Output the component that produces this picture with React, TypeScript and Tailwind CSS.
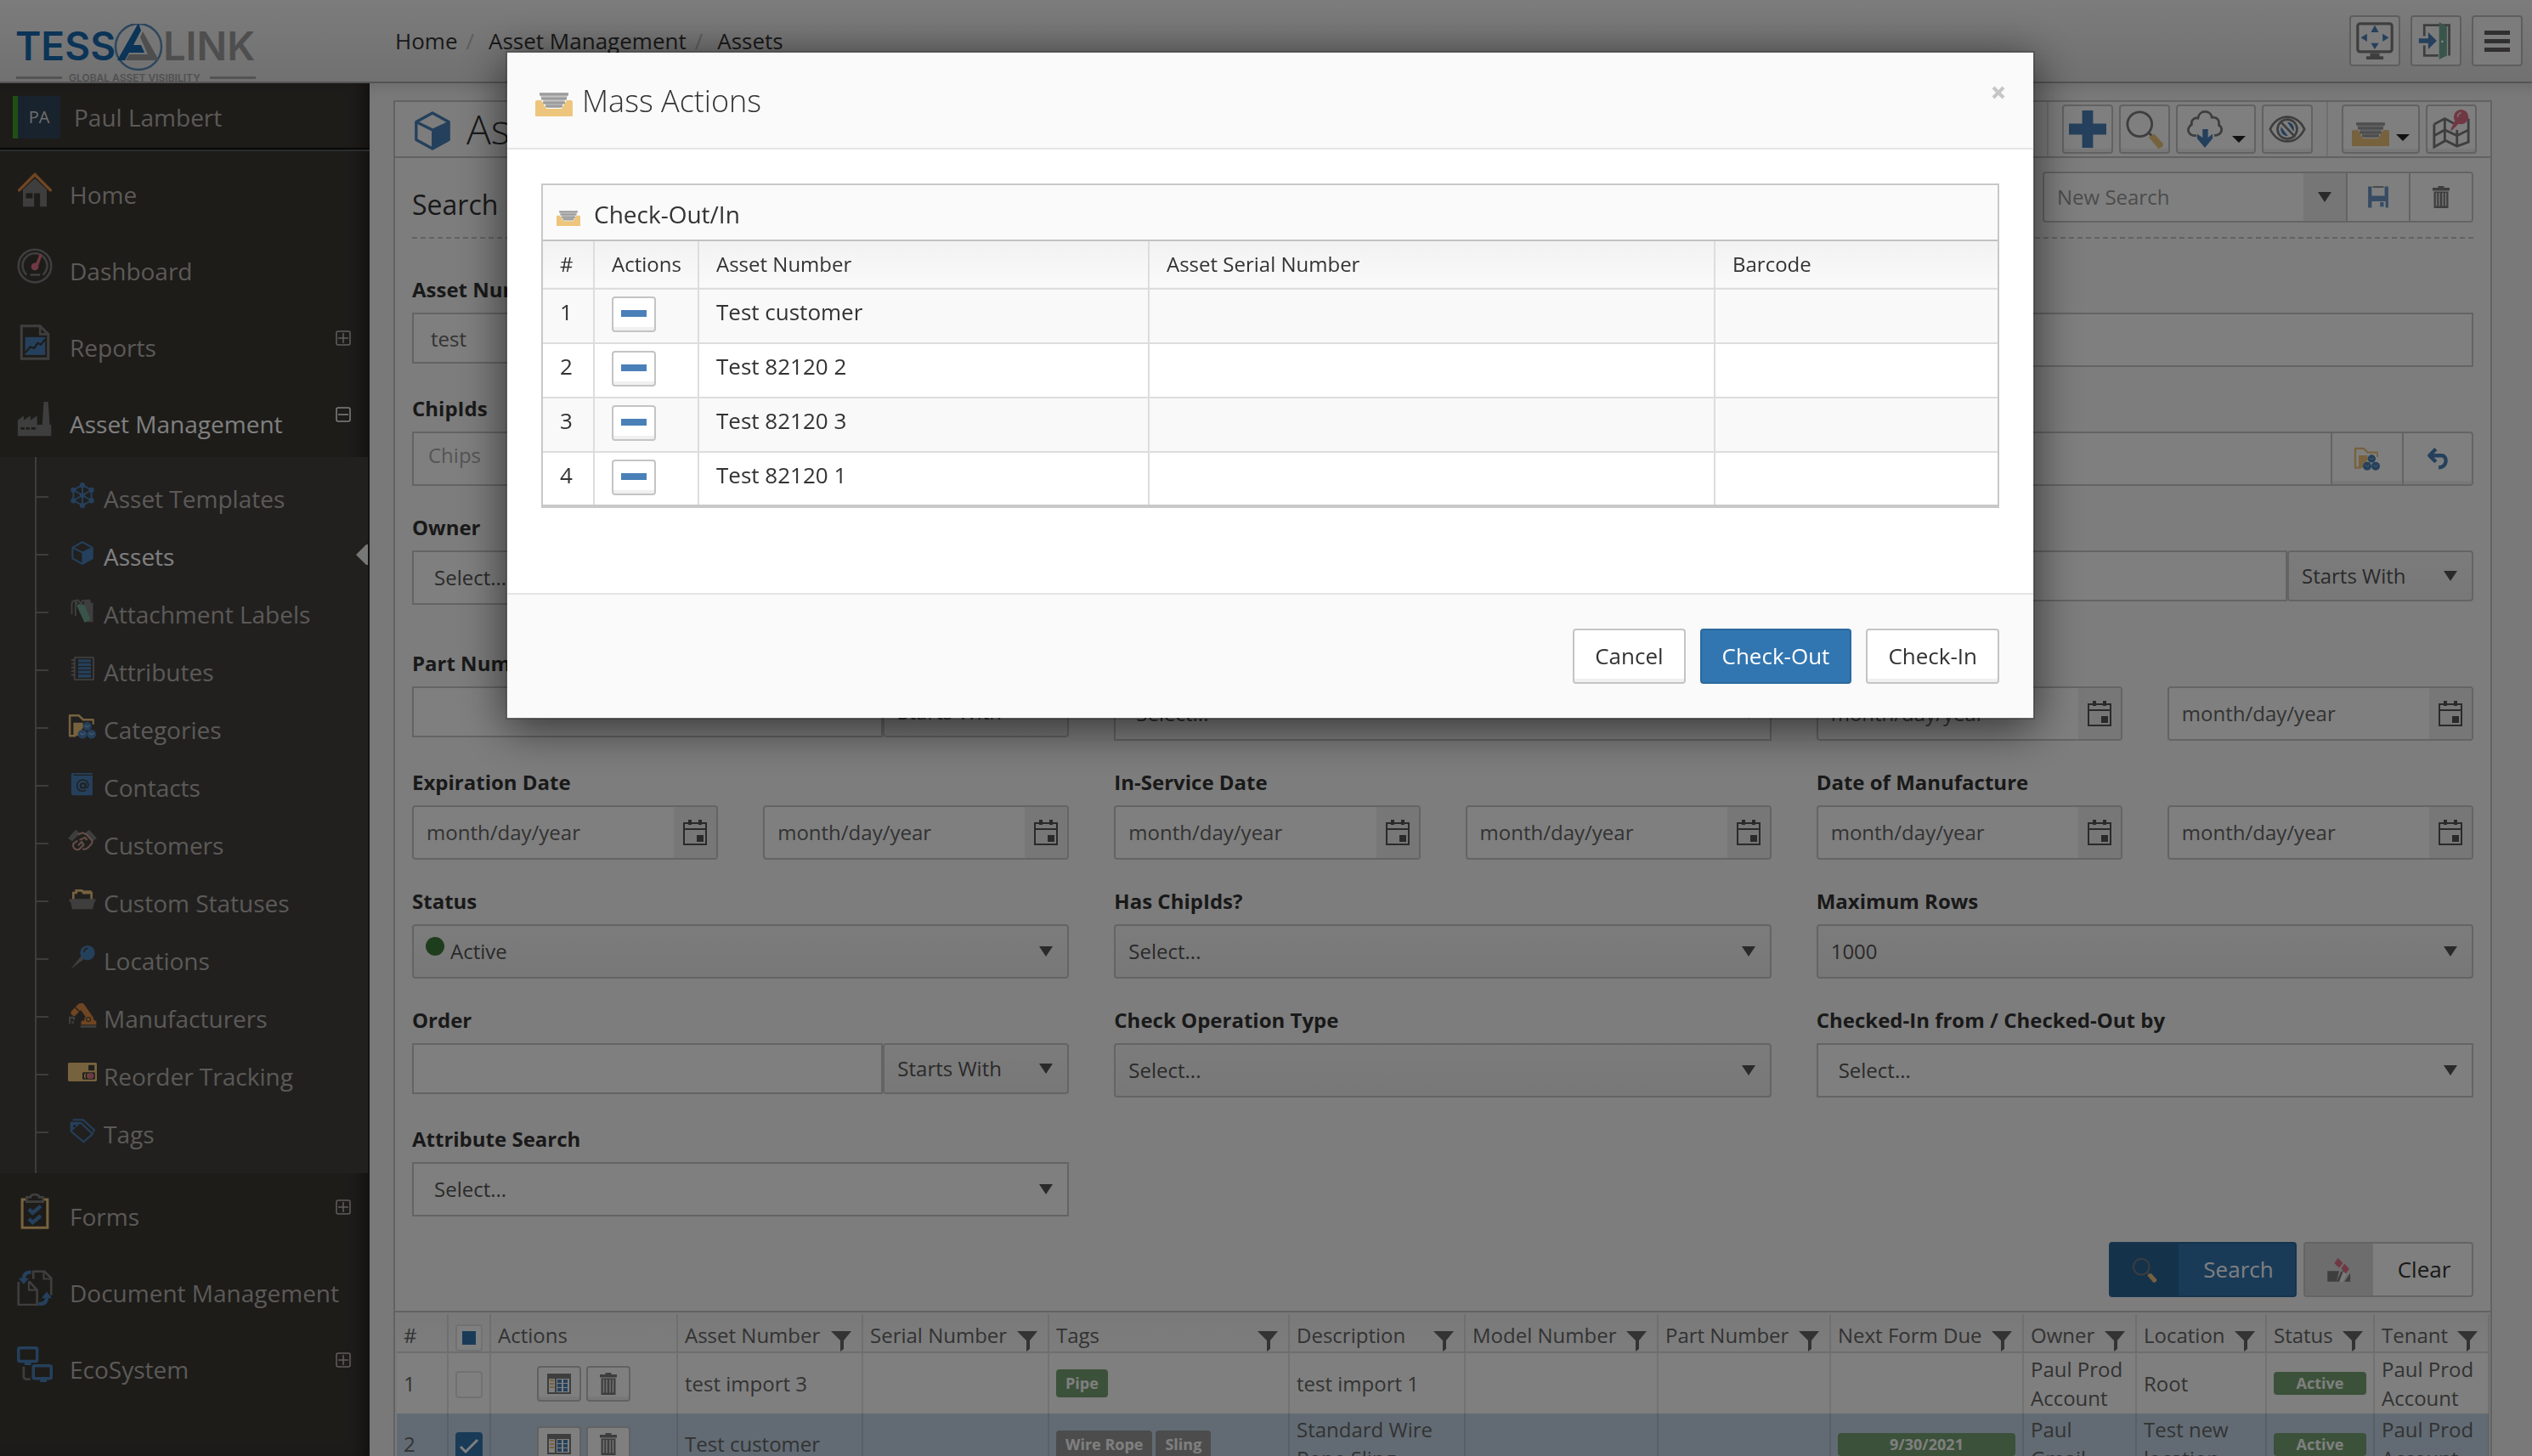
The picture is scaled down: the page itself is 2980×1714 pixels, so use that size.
import { useId } from "react";
import type { ReactNode } from "react";
import clsx from "clsx";

// ─── Icons ────────────────────────────────────────────────────────────────────

const BLUE   = "#4a80b8";
const GRAY   = "#7d7d7d";
const YELLOW = "#eec57c";
const GREEN  = "#72ab96";
const RED    = "#e07086";
const ORANGE = "#e08b42";

type IconProps = { className?: string };

function Svg({ className, children, box = "0 0 48 48" }: IconProps & { children: ReactNode; box?: string }) {
  return (
    <svg viewBox={box} className={clsx("shrink-0", className)} fill="none" aria-hidden="true">
      {children}
    </svg>
  );
}

function Logo() {
  return (
    <svg viewBox="0 0 282 80" className="h-20 w-[282px]" role="img" aria-label="Tessalink">
      <g fontFamily="Inter, sans-serif" fontSize="46">
        <text x="-1" y="43" fill="#1668ae" fontWeight="600">TESS</text>
        <text x="173" y="43" fill="#9c9c9c" fontWeight="600" fontSize="47">LINK</text>
      </g>
      <circle cx="144" cy="27" r="27" fill="none" stroke="#5b8db8" strokeWidth="2.5" />
      <path d="M144 -1 L119 43 H128 L133 34 H151 L147 25 H138 L147 8 Z" fill="#1668ae" />
      <path d="M149 9 L168 43 H129 L133 36 H155 L146 16 Z" fill="#9c9c9c" />
      <rect x="0" y="62" width="54" height="3" fill="#a6a6a6" />
      <rect x="228" y="62" width="54" height="3" fill="#a6a6a6" />
      <text x="62" y="68" fontFamily="Inter, sans-serif" fontWeight="600" fontSize="12" fill="#a0a0a0">
        GLOBAL ASSET VISIBILITY
      </text>
    </svg>
  );
}

const HomeIcon = (p: IconProps) => (
  <Svg {...p}>
    <path d="M8 24 24 9l16 15v23H31V29h-8v18H8z" fill={GRAY} />
    <rect x="12" y="29" width="9" height="7" fill="#3a3833" />
    <path d="M3 25 24 4l21 21" stroke={ORANGE} strokeWidth="4" strokeLinecap="round" />
  </Svg>
);

const DashboardIcon = (p: IconProps) => (
  <Svg {...p}>
    <circle cx="24" cy="24" r="22" stroke={GRAY} strokeWidth="3" />
    <path d="M13 36A16.500 16.500 0 1 1 35 36" stroke={GRAY} strokeWidth="3" />
    <path d="M18 36h13" stroke={GRAY} strokeWidth="3" />
    <path d="M31 7l3 2-6 17h-5z" fill={RED} />
    <circle cx="24" cy="25" r="5" fill={RED} />
  </Svg>
);

const ReportsIcon = (p: IconProps) => (
  <Svg {...p}>
    <path d="M6 2h25l11 11v33H6z" stroke={GRAY} strokeWidth="3.500" />
    <path d="M31 2v11h11" stroke={GRAY} strokeWidth="3" />
    <rect x="11" y="17" width="27" height="24" fill={BLUE} />
    <path d="M11 38l7-8 5 2 5-7 4 2 6-7" stroke="#3a3833" strokeWidth="2.500" />
  </Svg>
);

const FactoryIcon = (p: IconProps) => (
  <Svg {...p}>
    <path d="M36 1h6l2 31H34z" fill={GRAY} />
    <path d="M1 26l8-6v6l9-6v6l9-6v12h19v15H1z" fill={GRAY} />
    <path d="M5 37h5M12 37h5M19 37h6" stroke="#3a3833" strokeWidth="3" />
  </Svg>
);

const FormsIcon = (p: IconProps) => (
  <Svg {...p}>
    <path d="M12 8H7v38h34V8h-5" stroke={YELLOW} strokeWidth="3.500" />
    <path d="M13 5h5c1-5 11-5 12 0h5v6H13z" stroke={GRAY} strokeWidth="3" />
    <path d="M16 21l5 5 11-9M16 34l5 5 11-9" stroke={BLUE} strokeWidth="5" />
  </Svg>
);

const DocumentsIcon = (p: IconProps) => (
  <Svg {...p}>
    <path d="M22 12V2h15l9 9v23" stroke={GRAY} strokeWidth="3" />
    <path d="M36 2v10h10" stroke={GRAY} strokeWidth="2.500" />
    <path d="M2 16v31h25V27L16 15" stroke={GRAY} strokeWidth="3" />
    <path d="M16 15v12h11" stroke={GRAY} strokeWidth="2.500" />
    <path d="M19 3c-7 0-10 3-10 9" stroke={BLUE} strokeWidth="5" />
    <path d="M2 11h14l-7 8z" fill={BLUE} />
    <path d="M29 46c8 0 11-3 11-9" stroke={BLUE} strokeWidth="5" />
    <path d="M33 38h14l-7-9z" fill={BLUE} />
  </Svg>
);

const EcoIcon = (p: IconProps) => (
  <Svg {...p}>
    <rect x="2" y="2" width="25" height="18" rx="2" stroke={BLUE} strokeWidth="4" />
    <path d="M10 23h9M31 46h9" stroke={BLUE} strokeWidth="4" />
    <rect x="22" y="26" width="24" height="17" rx="2" stroke={BLUE} strokeWidth="4" />
    <path d="M9 27v14c0 3 2 3 9 3" stroke={GRAY} strokeWidth="3" />
  </Svg>
);

const TemplateIcon = (p: IconProps) => (
  <Svg {...p}>
    <path d="M24 5l17 9v20l-17 9-17-9V14zM7 14l34 20M41 14L7 34M24 5v38" stroke={BLUE} strokeWidth="3" />
    {[[24, 5], [41, 14], [41, 34], [24, 43], [7, 34], [7, 14], [24, 24]].map(([x, y]) => (
      <circle key={`${x}-${y}`} cx={x} cy={y} r="5" fill={BLUE} />
    ))}
  </Svg>
);

const CubeIcon = (p: IconProps) => (
  <Svg {...p}>
    <path d="M24 2l20 11v22L24 46 4 35V13z" stroke={BLUE} strokeWidth="3.500" strokeLinejoin="round" />
    <path d="M4 13l20 10" stroke={BLUE} strokeWidth="3.500" />
    <path d="M23 22l21-10v23L23 47z" fill={BLUE} />
  </Svg>
);

const LabelsIcon = (p: IconProps) => (
  <Svg {...p}>
    <path d="M27 6c8-6 13-4 13 3h4v36H27z" fill={GRAY} />
    <path d="M4 30V12c0-9 10-9 10 0M11 34V8c0-6 8-6 8 2" stroke={GRAY} strokeWidth="3" />
    <path d="M13 14l9-5 6 5 11 26-11 6z" fill={GREEN} />
    <path d="M22 14c-2-8 4-12 8-8" stroke={GRAY} strokeWidth="3" />
  </Svg>
);

const NotebookIcon = (p: IconProps) => (
  <Svg {...p}>
    <rect x="9" y="3" width="36" height="42" rx="2" stroke={GRAY} strokeWidth="3" />
    <rect x="16" y="7" width="24" height="34" fill={BLUE} />
    <path d="M16 13h24M16 20h24M16 27h24M16 34h24" stroke="#41403d" strokeWidth="2" />
    <path d="M3 8h8M3 15h8M3 22h8M3 29h8M3 36h8" stroke={GRAY} strokeWidth="3" />
  </Svg>
);

const CategoryIcon = (p: IconProps) => (
  <Svg {...p}>
    <path d="M43 13H25l-7-7H3v34h10" stroke={YELLOW} strokeWidth="3.500" strokeLinejoin="round" />
    <path d="M9 18h16v8L16 40H9z" fill={YELLOW} />
    <path d="M42 13v8" stroke={YELLOW} strokeWidth="3" />
    <circle cx="32" cy="24" r="7" fill={BLUE} />
    <circle cx="24" cy="37" r="7.500" fill={BLUE} />
    <circle cx="39" cy="37" r="7.500" fill={BLUE} />
    <path d="M28 23l4 2 4-2M20 35l4 3 4-3M35 35l4 3 4-3" stroke="#9db9d6" strokeWidth="1.500" />
  </Svg>
);

const ContactIcon = (p: IconProps) => (
  <Svg {...p}>
    <path d="M5 3h38v42H8a5 5 0 0 1-5-5V6c0-2 1-3 2-3z" fill={BLUE} />
    <path d="M7 7h36" stroke="#41403d" strokeWidth="2" />
    <circle cx="25" cy="27" r="4.500" stroke="#41403d" strokeWidth="3" />
    <path d="M30 22v7c1 3 5 2 5-3 0-14-21-13-21 1 0 11 12 12 17 8" stroke="#41403d" strokeWidth="2.500" />
  </Svg>
);

const HandshakeIcon = (p: IconProps) => (
  <Svg {...p}>
    <path d="M0 18L13 4l7 6L7 23zM48 18L35 4l-7 6 13 13z" fill={GRAY} />
    <path d="M17 12l7-3 7 3 9 10c2 5-3 7-7 12-3 3-5 3-9 2M16 22l-7 5c-2 8 5 12 10 9l7-7-3-5-6 6M19 21l9-4 4 4" stroke="#c99a8e" strokeWidth="3" />
  </Svg>
);

const StatusBoxIcon = (p: IconProps) => (
  <Svg {...p}>
    <path d="M8 24V12h5V8h10l3 4h14v12" stroke={YELLOW} strokeWidth="4" />
    <path d="M24 8h16v6H24z" fill={YELLOW} />
    <path d="M1 23h46v5h-2l-3 13H6L3 28H1z" fill={GRAY} />
  </Svg>
);

const PinIcon = (p: IconProps) => (
  <Svg {...p}>
    <path d="M22 22l4 5L5 43z" fill={GRAY} stroke={GRAY} />
    <circle cx="33" cy="16" r="13" fill={BLUE} />
    <path d="M27 15c0-5 3-7 7-7" stroke="#41403d" strokeWidth="2.500" />
  </Svg>
);

const RobotIcon = (p: IconProps) => (
  <Svg {...p}>
    <path d="M10 20l10-10M23 9l13 19" stroke={ORANGE} strokeWidth="10" strokeLinecap="round" />
    <path d="M12 11l8 8" stroke="#41403d" strokeWidth="2" />
    <path d="M22 40v-6l5-1c0-11 16-11 16-1l4 2v6z" fill={ORANGE} />
    <circle cx="34" cy="31" r="3.500" stroke="#41403d" strokeWidth="1.500" />
    <path d="M21 43h26" stroke={GRAY} strokeWidth="4" />
    <path d="M3 38V28h7v4M8 38v-4" stroke={GRAY} strokeWidth="3" />
  </Svg>
);

const ReorderIcon = (p: IconProps) => (
  <Svg {...p}>
    <rect x="0" y="7" width="48" height="31" rx="2" fill={YELLOW} />
    <rect x="34" y="11" width="10" height="9" fill="#41403d" />
    <rect x="24" y="23" width="21" height="12" rx="2" fill="#41403d" />
    <path d="M29 25c-2 3-2 5 0 8M34 25c-2 3-2 5 0 8" stroke={YELLOW} strokeWidth="2" />
    <circle cx="38" cy="29" r="5" fill={RED} />
  </Svg>
);

const TagsIcon = (p: IconProps) => (
  <Svg {...p}>
    <path d="M4 10h17l21 20-16 14L4 25z" stroke={BLUE} strokeWidth="3" strokeLinejoin="round" />
    <path d="M7 5h18l20 18-2 4" stroke={BLUE} strokeWidth="3" />
    <path d="M4 10h17L5 25z" fill={BLUE} />
    <circle cx="10" cy="16" r="2.500" fill="#41403d" />
  </Svg>
);

const FullscreenIcon = (p: IconProps) => (
  <Svg {...p}>
    <rect x="2" y="2" width="44" height="36" rx="3" stroke={GRAY} strokeWidth="3.500" />
    <path d="M18 40h12v4h5v4H13v-4h5z" fill={GRAY} />
    <path d="M19 13l5-9 5 9zM19 27l5 8 5-8zM14 15v10l-8-5zM34 15v10l8-5z" fill={BLUE} />
  </Svg>
);

const DoorIcon = (p: IconProps) => (
  <Svg {...p}>
    <path d="M9 18V4h32v39M9 30v13h18" stroke={GRAY} strokeWidth="3" />
    <path d="M28 0l10 6v37l-10 5z" fill={GREEN} />
    <path d="M2 21h12v-8l11 11-11 11v-8H2z" fill={BLUE} />
    <circle cx="32" cy="25" r="1.500" fill="#fff" />
  </Svg>
);

const PlusIcon = (p: IconProps) => (
  <Svg {...p}>
    <path d="M17 0h14v17h17v14H31v17H17V31H0V17h17z" fill={BLUE} />
  </Svg>
);

const MagnifierIcon = (p: IconProps) => (
  <Svg {...p}>
    <circle cx="18" cy="18" r="15" stroke={GRAY} strokeWidth="3" />
    <path d="M28 28l5 4" stroke={GRAY} strokeWidth="3" />
    <path d="M29 34l7-4 11 12-1 4-5 2z" fill={YELLOW} />
  </Svg>
);

const CloudIcon = (p: IconProps) => (
  <Svg {...p}>
    <path d="M13 32C3 34-1 23 7 18c-1-7 5-9 8-8C17-2 32 0 33 9c7-1 10 4 9 10 6 4 4 13-6 13" stroke={GRAY} strokeWidth="3" />
    <path d="M21 24h7v11l6-5v6L24 48 14 36v-6l7 5z" fill={BLUE} />
  </Svg>
);

const EyeIcon = (p: IconProps) => (
  <Svg {...p}>
    <path d="M2 24C12 3 36 3 46 24 36 45 12 45 2 24z" stroke={GRAY} strokeWidth="3" />
    <circle cx="24" cy="24" r="12.500" stroke={GRAY} strokeWidth="3" />
    <path d="M24 15c7 0 10 7 8 12zM16 21c-2 7 3 12 9 12z" fill={BLUE} />
    <path d="M15 14l19 20" stroke={GRAY} strokeWidth="3" />
  </Svg>
);

const TrayIcon = (p: IconProps) => (
  <Svg {...p} box="0 0 44 28">
    <path d="M5 0h34v2l-9 16H14L5 2z" fill="#c4c4c4" />
    <path d="M5 2h34M7 7h30M9 12h26M12 16h20" stroke="#9c9c9c" strokeWidth="3" />
    <path d="M0 11c0-1 1-2 2-2h5l6 10h18l6-10h5c1 0 2 1 2 2v17H0z" fill={YELLOW} />
  </Svg>
);

const MapIcon = (p: IconProps) => (
  <Svg {...p}>
    <path d="M3 18l13-7 11 6M45 11v29l-14 5-14-7-14 8V18M16 11v27M31 25v20M3 32l13-7 15 7 14-7" stroke={GRAY} strokeWidth="3" />
    <path d="M30 13l3 3-9 9z" fill={RED} stroke={RED} strokeWidth="2" />
    <circle cx="36" cy="9" r="9" fill={RED} />
    <path d="M32 9c0-3 2-5 4-5" stroke="#fff" strokeWidth="1.500" />
  </Svg>
);

const SaveIcon = (p: IconProps) => (
  <Svg {...p}>
    <path d="M2 1h8v20h28V1h8v46h-6V33H10v14H2z" fill={BLUE} opacity=".8" />
    <path d="M12 2h24" stroke={GRAY} strokeWidth="3" />
    <path d="M28 35h8v10h-8z" fill={BLUE} opacity=".8" />
  </Svg>
);

const TrashIcon = (p: IconProps) => (
  <Svg {...p} box="0 0 40 52">
    <path d="M13 0h14v4h13v7H0V4h13zM3 13h34v39H3z" fill={GRAY} />
    <path d="M9 16v31M16 16v31M24 16v31M31 16v31" stroke="#e6e6e6" strokeWidth="3" />
  </Svg>
);

const UndoIcon = (p: IconProps) => (
  <Svg {...p}>
    <path d="M20 3L6 17l14 14M8 17h24c14 0 14 26-6 26" stroke={BLUE} strokeWidth="8" strokeLinejoin="round" />
  </Svg>
);

const CalendarIcon = (p: IconProps) => (
  <Svg {...p} box="0 0 28 32">
    <path d="M1 5h26v25H1zM1 12h26" stroke="#555" strokeWidth="2" />
    <path d="M6 1h4v6H6zM18 1h4v6h-4zM16 19h8v8h-8z" fill="#555" />
  </Svg>
);

const GridIcon = (p: IconProps) => (
  <Svg {...p} box="0 0 28 24">
    <rect width="28" height="24" fill={GRAY} />
    <path d="M2 6h7v16H2zM11 6h15v16H11z" fill="#fff" />
    <path d="M3 8h5M3 12h5M3 16h5" stroke={YELLOW} strokeWidth="2" />
    <path d="M12 9h14M12 14h14M12 19h14" stroke={BLUE} strokeWidth="4" strokeDasharray="5 2" />
  </Svg>
);

const ClearIcon = (p: IconProps) => (
  <Svg {...p}>
    <path d="M22 1l9 10-7 9-9-9zM34 12l9 10-7 9-8-10z" fill={RED} />
    <path d="M2 26h22l-5 20H2z" fill={GRAY} />
    <path d="M27 28l5-3-8 21h-5zM45 30v16H34z" fill={GRAY} />
    <path d="M32 28l6 3-7 16h-6z" fill="#fff" opacity=".7" />
  </Svg>
);

const FunnelIcon = (p: IconProps) => (
  <Svg {...p} box="0 0 24 24">
    <path d="M0 0h24l-9 11v10l-4 3V11z" fill="#666" />
  </Svg>
);

const Triangle = (p: IconProps) => (
  <Svg {...p} box="0 0 16 12">
    <path d="M0 0h16L8 12z" fill="#555" />
  </Svg>
);

const Caret = (p: IconProps) => (
  <Svg {...p} box="0 0 16 8">
    <path d="M0 0h16L8 8z" fill="#222" />
  </Svg>
);

// ─── Data ─────────────────────────────────────────────────────────────────────

const subItems = [
  { label: "Asset Templates",   icon: TemplateIcon,  size: "size-[30px]" },
  { label: "Assets",            icon: CubeIcon,      size: "size-[28px]", active: true },
  { label: "Attachment Labels", icon: LabelsIcon,    size: "size-[30px]" },
  { label: "Attributes",        icon: NotebookIcon,  size: "size-[30px]" },
  { label: "Categories",        icon: CategoryIcon,  size: "size-[34px]" },
  { label: "Contacts",          icon: ContactIcon,   size: "size-[30px]" },
  { label: "Customers",         icon: HandshakeIcon, size: "size-[34px]" },
  { label: "Custom Statuses",   icon: StatusBoxIcon, size: "size-[32px]" },
  { label: "Locations",         icon: PinIcon,       size: "size-[32px]" },
  { label: "Manufacturers",     icon: RobotIcon,     size: "size-[34px]" },
  { label: "Reorder Tracking",  icon: ReorderIcon,   size: "size-[34px]" },
  { label: "Tags",              icon: TagsIcon,      size: "size-[32px]" },
];

const columns = [
  { label: "#",             col: "w-[60px]" },
  { label: "select",        col: "w-[50px]" },
  { label: "Actions",       col: "w-[220px]" },
  { label: "Asset Number",  col: "w-[218px]", filter: true },
  { label: "Serial Number", col: "w-[219px]", filter: true },
  { label: "Tags",          col: "w-[283px]", filter: true },
  { label: "Description",   col: "w-[207px]", filter: true },
  { label: "Model Number",  col: "w-[227px]", filter: true },
  { label: "Part Number",   col: "w-[203px]", filter: true },
  { label: "Next Form Due", col: "w-[227px]", filter: true },
  { label: "Owner",         col: "w-[133px]", filter: true },
  { label: "Location",      col: "w-[153px]", filter: true },
  { label: "Status",        col: "w-[127px]", filter: true },
  { label: "Tenant",        col: "w-[135px]", filter: true },
];

const assets = [
  {
    number: "test import 3", tags: ["Pipe"], tagTone: "bg-[#76a373]", description: "test import 1", due: "",
    owner: "Paul Prod Account", location: "Root", tenant: "Paul Prod Account", checked: false,
  },
  {
    number: "Test customer", tags: ["Wire Rope", "Sling"], tagTone: "bg-[#999]", description: "Standard Wire Rope Sling", due: "9/30/2021",
    owner: "Paul Gmail", location: "Test new location", tenant: "Paul Prod Account", checked: true,
  },
];

const selectedAssets = ["Test customer", "Test 82120 2", "Test 82120 3", "Test 82120 1"];

// ─── Sidebar ──────────────────────────────────────────────────────────────────

function Toggle({ open }: { open?: boolean }) {
  return (
    <Svg className={clsx("mb-2.5 ml-auto size-[18px]", open ? "text-white" : "text-[#c0bbb7]")} box="0 0 18 18">
      <rect x="1" y="1" width="16" height="16" rx="2" stroke="currentColor" strokeWidth="1.500" />
      <path d={open ? "M3 9h12" : "M3 9h12M9 3v12"} stroke="currentColor" strokeWidth="1.500" />
    </Svg>
  );
}

function NavItem({ label, icon: Icon, open, expandable }: {
  label: string;
  icon: (p: IconProps) => ReactNode;
  open?: boolean;
  expandable?: boolean;
}) {
  return (
    <a
      href="#"
      className={clsx("flex h-[90px] items-center pl-5 pr-[22px] text-[28px]", open ? "text-white" : "text-[#b8b3af]")}
    >
      <Icon className="size-[42px]" />
      <span className="ml-5 whitespace-nowrap pt-3">{label}</span>
      {expandable && <Toggle open={open} />}
    </a>
  );
}

function Sidebar() {
  return (
    <aside className="w-[435px] shrink-0 bg-[#3a3833] shadow-[inset_-16px_0_20px_-10px_rgba(0,0,0,0.45)]">
      <div className="flex h-20 items-center border-b-2 border-[#55565a] pl-[15px] pt-0.5 shadow-[inset_0_-2px_0_#111]">
        <span className="flex h-[50px] w-14 items-center justify-center border-l-[6px] border-[#40a028] bg-[#33465a] text-xl text-[#ddd]">
          PA
        </span>
        <a href="#" className="ml-4 text-[28px] text-[#b8b3af]">Paul Lambert</a>
      </div>
      <nav>
        <NavItem label="Home" icon={HomeIcon} />
        <NavItem label="Dashboard" icon={DashboardIcon} />
        <NavItem label="Reports" icon={ReportsIcon} expandable />
        <NavItem label="Asset Management" icon={FactoryIcon} expandable open />
        <div className="mr-0.5 bg-[#42413e] pl-[41px]">
          <ul className="border-l-2 border-[#7a7a78] pb-3.5 pt-[13px]">
            {subItems.map(({ label, icon: Icon, size, active }) => (
              <li key={label} className="flex h-[68px] items-center">
                <span className="h-0.5 w-3.5 bg-[#7a7a78]" />
                <a
                  href="#"
                  className={clsx("ml-[23px] flex items-center gap-2 text-[28px]", active ? "text-white" : "text-[#b8b3af]")}
                >
                  <span className="mb-1 flex w-[34px] justify-center">
                    <Icon className={size} />
                  </span>
                  <span className="whitespace-nowrap pt-1">{label}</span>
                </a>
                {active && (
                  <Svg className="ml-auto h-6 w-3.5" box="0 0 14 24">
                    <path d="M14 0h-2L0 12l12 12h2z" fill="#eee" />
                  </Svg>
                )}
              </li>
            ))}
          </ul>
        </div>
        <NavItem label="Forms" icon={FormsIcon} expandable />
        <NavItem label="Document Management" icon={DocumentsIcon} />
        <NavItem label="EcoSystem" icon={EcoIcon} expandable />
      </nav>
    </aside>
  );
}

// ─── Form controls ────────────────────────────────────────────────────────────

const LINE = "border-2 border-[#c8c8c8]";
const BTN  = "flex items-center justify-center rounded border-2 border-[#c4c4c4] bg-white shadow-[inset_0_-4px_0_rgba(0,0,0,0.06)]";

function Field({ label, className, children }: { label: string; className?: string; children: (id: string) => ReactNode }) {
  const id = useId();
  return (
    <div className={className}>
      <label htmlFor={id} className="mb-[9px] block text-2xl font-bold leading-9 text-[#333]">{label}</label>
      {children(id)}
    </div>
  );
}

function TextBox({ id, value, tall }: { id: string; value?: string; tall?: boolean }) {
  return (
    <input
      id={id}
      type="text"
      defaultValue={value}
      className={clsx(LINE, "w-full min-w-0 bg-white px-5 text-2xl text-[#666]", tall ? "h-16" : "h-[60px]")}
    />
  );
}

// Flat selects are white and square, the others are shaded and rounded
function Select({ id, value, flat, short, label }: { id?: string; value: string; flat?: boolean; short?: boolean; label?: string }) {
  return (
    <div className="grid w-full">
      <select
        id={id}
        aria-label={label}
        className={clsx(
          LINE,
          "col-start-1 row-start-1 w-full appearance-none text-2xl text-[#555]",
          flat ? "bg-white px-6" : "rounded bg-linear-to-b from-[#f8f8f8] to-[#f0f0f0] px-[15px]",
          short ? "h-[60px]" : "h-16",
        )}
      >
        <option>{value}</option>
      </select>
      <Triangle className="pointer-events-none col-start-1 row-start-1 mr-[19px] h-3 w-4 self-center justify-self-end" />
    </div>
  );
}

function StartsWith({ id, value }: { id: string; value?: string }) {
  return (
    <div className="flex">
      <TextBox id={id} value={value} />
      <div className="w-[219px] shrink-0">
        <Select value="Starts With" short label="Match type" />
      </div>
    </div>
  );
}

function DateBox({ id, label }: { id?: string; label?: string }) {
  return (
    <div className={clsx(LINE, "flex h-16 flex-1 overflow-hidden rounded bg-white")}>
      <input
        id={id}
        aria-label={label}
        type="text"
        placeholder="month/day/year"
        className="w-full min-w-0 px-[15px] text-2xl placeholder:text-[#666]"
      />
      <button type="button" aria-label="Open calendar" className="flex w-[50px] shrink-0 items-center justify-center bg-[#efefef]">
        <CalendarIcon className="h-8 w-7" />
      </button>
    </div>
  );
}

function DateRange({ id }: { id: string }) {
  return (
    <div className="flex gap-[53px]">
      <DateBox id={id} />
      <DateBox label="To" />
    </div>
  );
}

function SearchForm() {
  return (
    <form className="px-5">
      <div className="flex items-start justify-between border-b-2 border-dashed border-[#c4c4c4] pb-4 pt-4">
        <h2 className="pt-[17px] text-[32px] leading-[44px] text-[#333]">Search</h2>
        <div className="flex h-[60px] w-[507px]">
          <div className={clsx(LINE, "flex flex-1 overflow-hidden rounded-l bg-white")}>
            <input
              type="text"
              aria-label="Saved search"
              placeholder="New Search"
              className="w-full min-w-0 px-[15px] text-2xl placeholder:text-[#999]"
            />
            <button type="button" aria-label="Saved searches" className="flex w-[50px] shrink-0 items-center justify-center bg-[#ededed]">
              <Triangle className="h-3 w-4" />
            </button>
          </div>
          <button type="button" aria-label="Save search" className="flex w-[74px] items-center justify-center border-y-2 border-r-2 border-[#c8c8c8] bg-white">
            <SaveIcon className="size-[26px]" />
          </button>
          <button type="button" aria-label="Delete search" className="flex w-[74px] items-center justify-center rounded-r border-y-2 border-r-2 border-[#c8c8c8] bg-white">
            <TrashIcon className="h-[26px] w-5" />
          </button>
        </div>
      </div>

      <div className="grid grid-cols-3 gap-x-[53px] gap-y-[31px] pt-[42px]">
        <Field label="Asset Number">{(id) => <StartsWith id={id} value="test" />}</Field>
        <Field label="Serial Number">{(id) => <StartsWith id={id} />}</Field>
        <Field label="Barcode">{(id) => <TextBox id={id} tall />}</Field>

        <Field label="ChipIds">
          {(id) => (
            <input id={id} type="text" placeholder="Chips" className={clsx(LINE, "h-16 w-full bg-white px-[17px] pb-2.5 text-2xl placeholder:text-[#aaa]")} />
          )}
        </Field>
        <Field label="Tags">{(id) => <Select id={id} value="Select..." flat />}</Field>
        <Field label="Category">
          {(id) => (
            <div className="flex">
              <TextBox id={id} tall />
              <button type="button" aria-label="Browse categories" className="flex w-[82px] shrink-0 items-center justify-center border-y-2 border-[#c8c8c8] bg-white shadow-[inset_0_-4px_0_rgba(0,0,0,0.06)]">
                <CategoryIcon className="size-8" />
              </button>
              <button type="button" aria-label="Reset category" className="flex w-[84px] shrink-0 items-center justify-center rounded-r border-2 border-[#c8c8c8] bg-white shadow-[inset_0_-4px_0_rgba(0,0,0,0.06)]">
                <UndoIcon className="size-[26px]" />
              </button>
            </div>
          )}
        </Field>

        <Field label="Owner" className="pb-5">{(id) => <Select id={id} value="Select..." flat />}</Field>
        <Field label="Location">{(id) => <Select id={id} value="Select..." flat />}</Field>
        <Field label="Model Number">{(id) => <StartsWith id={id} />}</Field>

        <Field label="Part Number">{(id) => <StartsWith id={id} />}</Field>
        <Field label="Manufacturer">{(id) => <Select id={id} value="Select..." flat />}</Field>
        <Field label="Next Form Due">{(id) => <DateRange id={id} />}</Field>

        <Field label="Expiration Date">{(id) => <DateRange id={id} />}</Field>
        <Field label="In-Service Date">{(id) => <DateRange id={id} />}</Field>
        <Field label="Date of Manufacture">{(id) => <DateRange id={id} />}</Field>

        <Field label="Status">
          {(id) => (
            <div className="grid">
              <select
                id={id}
                className={clsx(LINE, "col-start-1 row-start-1 h-16 appearance-none rounded bg-linear-to-b from-[#f8f8f8] to-[#f0f0f0] pl-[43px] text-2xl text-[#555]")}
              >
                <option>Active</option>
              </select>
              <span className="pointer-events-none col-start-1 row-start-1 mb-3 ml-4 size-[22px] self-center rounded-full bg-[#3c7a38]" />
              <Triangle className="pointer-events-none col-start-1 row-start-1 mr-[19px] h-3 w-4 self-center justify-self-end" />
            </div>
          )}
        </Field>
        <Field label="Has ChipIds?">{(id) => <Select id={id} value="Select..." />}</Field>
        <Field label="Maximum Rows">{(id) => <Select id={id} value="1000" />}</Field>

        <Field label="Order">{(id) => <StartsWith id={id} />}</Field>
        <Field label="Check Operation Type">{(id) => <Select id={id} value="Select..." />}</Field>
        <Field label="Checked-In from / Checked-Out by">{(id) => <Select id={id} value="Select..." flat />}</Field>

        <Field label="Attribute Search">{(id) => <Select id={id} value="Select..." flat />}</Field>
      </div>

      <div className="flex justify-end gap-2 pb-4 pt-[30px] text-[26px]">
        <button type="submit" className="flex h-[65px] w-[221px] overflow-hidden rounded border-2 border-[#2c699d] bg-[#3276b1] text-white">
          <span className="flex w-20 items-center justify-center self-stretch bg-black/15">
            <MagnifierIcon className="size-[30px]" />
          </span>
          <span className="flex-1 self-center pl-1">Search</span>
        </button>
        <button type="reset" className={clsx(LINE, "flex h-[65px] w-[200px] overflow-hidden rounded bg-white text-[#333]")}>
          <span className="flex w-20 items-center justify-center self-stretch bg-[#dadada]">
            <ClearIcon className="size-[30px]" />
          </span>
          <span className="flex-1 self-center pl-1">Clear</span>
        </button>
      </div>
    </form>
  );
}

// ─── Asset grid ───────────────────────────────────────────────────────────────

function CheckBox({ label, state }: { label: string; state: "on" | "off" | "mixed" }) {
  return (
    <span className="inline-grid place-items-center align-middle">
      <input
        type="checkbox"
        aria-label={label}
        defaultChecked={state === "on"}
        className={clsx(
          "col-start-1 row-start-1 size-8 appearance-none rounded border-2",
          state === "on" ? "border-[#3276b1] bg-[#3276b1]" : "border-[#e2e2e2] bg-white",
        )}
      />
      {state === "mixed" && <span className="pointer-events-none col-start-1 row-start-1 size-4 bg-[#3276b1]" />}
      {state === "on" && (
        <Svg className="pointer-events-none col-start-1 row-start-1 size-6" box="0 0 24 24">
          <path d="M2 13l6 6L22 5" stroke="#fff" strokeWidth="3" />
        </Svg>
      )}
    </span>
  );
}

function AssetGrid() {
  const cell = "border-r-2 border-black/10 px-2 leading-[34px]";
  const badge = "rounded text-center text-lg font-bold leading-[27px] text-white";
  return (
    <div className="border-t-2 border-[#c4c4c4] bg-[#f4f4f4] p-0.5">
      <table className="w-full table-fixed border-collapse text-2xl text-[#666]">
        <colgroup>
          {columns.map((c) => <col key={c.label} className={c.col} />)}
        </colgroup>
        <thead>
          <tr className="border-b-2 border-[#dcdcdc] bg-linear-to-b from-[#f4f4f4] to-[#fafafa]">
            {columns.map((c) => (
              <th key={c.label} className="border-r-2 border-[#dfdfdf] p-0 text-left font-normal">
                <div className="flex h-11 items-end justify-between whitespace-nowrap pl-2 pr-3">
                  {c.label === "select" ? (
                    <CheckBox label="Select all" state="mixed" />
                  ) : (
                    <span className="pb-0.5 leading-[34px]">{c.label}</span>
                  )}
                  {c.filter && (
                    <button type="button" aria-label={`Filter ${c.label}`}>
                      <FunnelIcon className="size-6" />
                    </button>
                  )}
                </div>
              </th>
            ))}
          </tr>
        </thead>
        <tbody>
          {assets.map((a, i) => (
            <tr key={a.number} className={clsx("h-[72px]", a.checked ? "bg-[#c4d6e6]" : "bg-white")}>
              <td className={cell}>{i + 1}</td>
              <td className={cell}><CheckBox label={`Select ${a.number}`} state={a.checked ? "on" : "off"} /></td>
              <td className={cell}>
                <div className="flex justify-center gap-1.5">
                  <button type="button" aria-label="Details" className={clsx(BTN, "h-[42px] w-[52px]")}><GridIcon className="h-6 w-7" /></button>
                  <button type="button" aria-label="Delete" className={clsx(BTN, "h-[42px] w-[52px]")}><TrashIcon className="h-[26px] w-5" /></button>
                </div>
              </td>
              <td className={cell}>{a.number}</td>
              <td className={cell} />
              <td className={cell}>
                <div className="flex gap-1">
                  {a.tags.map((t) => (
                    <span key={t} className={clsx("rounded px-[11px] text-lg font-bold leading-[33px] text-white", a.tagTone)}>{t}</span>
                  ))}
                </div>
              </td>
              <td className={cell}>{a.description}</td>
              <td className={cell} />
              <td className={cell} />
              <td className={cell}>{a.due && <div className={clsx(badge, "bg-[#76a373]")}>{a.due}</div>}</td>
              <td className={cell}>{a.owner}</td>
              <td className={cell}>{a.location}</td>
              <td className={cell}><div className={clsx(badge, "bg-[#76a373]")}>Active</div></td>
              <td className={cell}>{a.tenant}</td>
            </tr>
          ))}
        </tbody>
      </table>
    </div>
  );
}

// ─── Modal ────────────────────────────────────────────────────────────────────

function MassActionsModal() {
  return (
    <div className="fixed inset-0 flex items-start justify-center bg-black/50 pl-2.5 pt-[60px]">
      <div
        role="dialog"
        aria-label="Mass Actions"
        className="w-[1800px] max-w-full border-2 border-black/20 bg-white bg-clip-padding shadow-[0_10px_50px_rgba(0,0,0,0.6)]"
      >
        <div className="flex h-[114px] items-center border-b-2 border-[#e5e5e5] bg-[#fafafa] px-[33px]">
          <TrayIcon className="mt-2.5 h-7 w-11" />
          <h1 className="ml-[11px] pt-0.5 text-4xl font-light text-[#333]">Mass Actions</h1>
          <button type="button" aria-label="Close" className="mb-[18px] ml-auto">
            <Svg className="size-4 text-[#c6c6c6]" box="0 0 16 16">
              <path d="M2 2l12 12M14 2L2 14" stroke="currentColor" strokeWidth="4" />
            </Svg>
          </button>
        </div>

        <div className="px-10 pb-[100px] pt-10">
          <div className="border-2 border-b-4 border-[#c8c8c8]">
            <div className="flex h-[66px] items-center border-b-2 border-[#c2c2c2] bg-[#fafafa] pl-4">
              <TrayIcon className="mt-3.5 h-[18px] w-7" />
              <h2 className="ml-4 pt-1 text-[28px] text-[#333]">Check-Out/In</h2>
            </div>
            <table className="w-full table-fixed border-collapse text-left text-[26px] text-[#333]">
              <colgroup>
                <col className="w-[60px]" />
                <col className="w-[123px]" />
                <col className="w-[530px]" />
                <col className="w-[666px]" />
                <col className="w-[333px]" />
              </colgroup>
              <thead>
                <tr className="h-14 border-b-2 border-[#ddd] bg-linear-to-b from-[#f2f2f2] to-[#fafafa] text-2xl">
                  {["#", "Actions", "Asset Number", "Asset Serial Number", "Barcode"].map((h) => (
                    <th key={h} className="whitespace-nowrap border-r-2 border-[#ddd] pb-0.5 pl-5 font-normal last:border-r-0">{h}</th>
                  ))}
                </tr>
              </thead>
              <tbody>
                {selectedAssets.map((name, i) => (
                  <tr key={name} className="h-16 border-b-2 border-[#ddd] align-top leading-9 odd:bg-[#f9f9f9] last:h-[62px] last:border-b-0">
                    <td className="border-r-2 border-[#ddd] pl-5 pt-2">{i + 1}</td>
                    <td className="border-r-2 border-[#ddd] pl-5 pt-2">
                      <button type="button" aria-label={`Remove ${name}`} className={clsx(BTN, "h-[42px] w-[52px] pb-0.5")}>
                        <span className="h-2 w-[30px] bg-[#4a80b8]" />
                      </button>
                    </td>
                    <td className="border-r-2 border-[#ddd] pl-5 pt-2">{name}</td>
                    <td className="border-r-2 border-[#ddd]" />
                    <td />
                  </tr>
                ))}
              </tbody>
            </table>
          </div>
        </div>

        <div className="flex justify-end gap-[17px] border-t-2 border-[#e5e5e5] bg-[#fafafa] p-10 text-[26px]">
          <button type="button" className={clsx(BTN, "h-[65px] px-6 text-[#333]")}>Cancel</button>
          <button type="button" className="h-[65px] rounded border-2 border-[#2c699d] bg-[#3276b1] px-6 text-white">Check-Out</button>
          <button type="button" className={clsx(BTN, "h-[65px] px-6 text-[#333]")}>Check-In</button>
        </div>
      </div>
    </div>
  );
}

// ─── Page ─────────────────────────────────────────────────────────────────────

export default function App() {
  return (
    <div className="flex h-screen flex-col overflow-hidden bg-[#f3f3f3] font-['Open_Sans',sans-serif]">
      <header className="flex h-[98px] shrink-0 items-center overflow-hidden border-b-2 border-[#a8a8a8] bg-linear-to-b from-[#f8f8f8] to-[#e2e2e2] pr-[11px]">
        <div className="w-[465px] shrink-0 self-start pl-[19px] pt-7">
          <Logo />
        </div>
        <nav aria-label="Breadcrumb" className="flex text-[26px] text-[#333]">
          <a href="#">Home</a>
          <span className="pl-2.5 pr-[17px] text-[#bbb]">/</span>
          <a href="#">Asset Management</a>
          <span className="pl-2.5 pr-[17px] text-[#bbb]">/</span>
          <a href="#">Assets</a>
        </nav>
        <div className="ml-auto flex gap-3">
          <button type="button" aria-label="Full screen" className="flex size-[60px] items-center justify-center rounded border-2 border-[#bcbcbc] bg-[#f8f8f8]">
            <FullscreenIcon className="size-11" />
          </button>
          <button type="button" aria-label="Sign out" className="flex size-[60px] items-center justify-center rounded border-2 border-[#bcbcbc] bg-[#f8f8f8]">
            <DoorIcon className="size-11" />
          </button>
          <button type="button" aria-label="Menu" className="flex size-[60px] flex-col items-center justify-center gap-[5px] rounded border-2 border-[#bcbcbc] bg-[#f8f8f8]">
            <span className="h-[5px] w-[30px] bg-[#635f5f]" />
            <span className="h-[5px] w-[30px] bg-[#635f5f]" />
            <span className="h-[5px] w-[30px] bg-[#635f5f]" />
          </button>
        </div>
      </header>

      <div className="flex min-h-0 flex-1">
        <Sidebar />
        <main className="min-w-0 flex-1 pl-7 pr-[47px] pt-5 shadow-[inset_0_12px_16px_-8px_rgba(0,0,0,0.12)]">
          <section className="border-2 border-[#c4c4c4] bg-[#fbfbfb]">
            <div className="flex h-[66px] items-center border-b-2 border-[#c4c4c4]">
              <CubeIcon className="ml-[21px] mt-1 h-[46px] w-[46px]" />
              <h1 className="ml-[17px] text-5xl font-light text-[#333]">Assets</h1>
              <div className="ml-auto flex h-full items-center gap-[7px] pr-4">
                <span className="mr-[9px] h-full w-0.5 bg-[#dedede]" />
                <button type="button" aria-label="Add" className={clsx(BTN, "h-[58px] w-[60px]")}><PlusIcon className="size-11" /></button>
                <button type="button" aria-label="Search" className={clsx(BTN, "h-[58px] w-[60px]")}><MagnifierIcon className="size-[46px]" /></button>
                <button type="button" aria-label="Export" className={clsx(BTN, "h-[58px] w-[94px] gap-2.5")}>
                  <CloudIcon className="size-11" />
                  <Caret className="mt-6 h-2 w-4" />
                </button>
                <button type="button" aria-label="Hide columns" className={clsx(BTN, "h-[58px] w-[60px]")}><EyeIcon className="size-11" /></button>
                <span className="mx-[9px] h-full w-0.5 bg-[#dedede]" />
                <button type="button" aria-label="Mass actions" className={clsx(BTN, "h-[58px] w-[92px] gap-2")}>
                  <TrayIcon className="mt-3 h-7 w-11" />
                  <Caret className="mt-5 h-2 w-4" />
                </button>
                <button type="button" aria-label="Map" className={clsx(BTN, "h-[58px] w-[60px]")}><MapIcon className="size-[46px]" /></button>
              </div>
            </div>
            <SearchForm />
            <AssetGrid />
          </section>
        </main>
      </div>

      <MassActionsModal />
    </div>
  );
}
